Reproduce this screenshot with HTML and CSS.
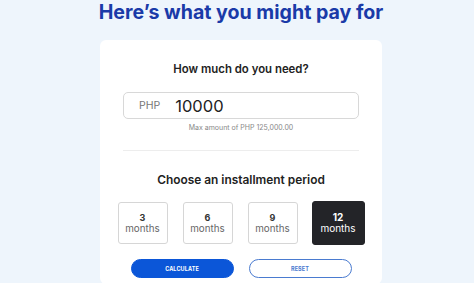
FILE: index.html
```html
<!DOCTYPE html>
<html lang="en">
<head>
<meta charset="utf-8">
<title>Installment calculator</title>
<link rel="stylesheet" href="styles.css">
</head>
<body>
<main class="page">
  <h1 class="title">Here’s what you might pay for</h1>
  <section class="card">
    <h2 class="label">How much do you need?</h2>
    <div class="amount">
      <span class="currency">PHP</span>
      <span class="value">10000</span>
    </div>
    <p class="hint">Max amount of PHP 125,000.00</p>
    <hr class="divider">
    <h2 class="label label-period">Choose an installment period</h2>
    <div class="periods">
      <div class="period"><span class="num">3</span><span class="unit">months</span></div>
      <div class="period"><span class="num">6</span><span class="unit">months</span></div>
      <div class="period"><span class="num">9</span><span class="unit">months</span></div>
      <div class="period period-active"><span class="num">12</span><span class="unit">months</span></div>
    </div>
    <div class="actions">
      <button class="btn btn-primary">CALCULATE</button>
      <button class="btn btn-outline">RESET</button>
    </div>
  </section>
</main>
</body>
</html>
```
FILE: styles.css
```css
html, body {
  margin: 0;
  padding: 0;
  height: 100%;
  overflow: hidden;
}
body {
  background: #eef5fc;
  font-family: "Inter", "Noto Sans", sans-serif;
  color: #222;
}
.page {
  display: flex;
  flex-direction: column;
  align-items: center;
  padding-left: 8px;
}
.title {
  margin: 0;
  height: 40px;
  line-height: 24px;
  font-size: 19.6px;
  font-weight: 700;
  color: #1a3aa8;
}
.card {
  width: 282px;
  box-sizing: border-box;
  background: #fff;
  border-radius: 6px;
  padding: 21px 23px 6px;
  display: flex;
  flex-direction: column;
  align-items: center;
}
.label {
  margin: 0;
  font-size: 11.4px;
  line-height: 16px;
  font-weight: 600;
  color: #222;
}
.amount {
  margin-top: 15px;
  width: 236px;
  height: 27px;
  box-sizing: border-box;
  border: 1px solid #d8d8d8;
  border-radius: 5px;
  display: flex;
  align-items: center;
  padding-left: 15px;
  gap: 15px;
}
.currency {
  font-size: 10.5px;
  color: #777;
}
.value {
  font-size: 16.5px;
  color: #222;
}
.hint {
  margin: 4px 0 0;
  font-size: 7px;
  line-height: 10px;
  color: #888;
}
.divider {
  margin: 17px 0 0;
  width: 236px;
  border: 0;
  border-top: 1px solid #ededed;
}
.label-period {
  margin-top: 21px;
  font-size: 11.9px;
}
.periods {
  margin-top: 13px;
  display: flex;
  align-items: center;
  gap: 15px;
}
.period {
  width: 50px;
  height: 42px;
  box-sizing: border-box;
  border: 1px solid #d6d6d6;
  border-radius: 3px;
  display: flex;
  flex-direction: column;
  align-items: center;
  justify-content: center;
  line-height: 11px;
}
.num {
  font-size: 9px;
  font-weight: 700;
  color: #333;
}
.unit {
  font-size: 9.8px;
  color: #666;
}
.period-active {
  width: 53px;
  height: 44px;
  background: #232428;
  border-color: #232428;
  margin-left: -1px;
}
.period-active .num,
.period-active .unit {
  color: #fff;
  font-size: 10px;
}
.actions {
  margin-top: 14px;
  display: flex;
  gap: 15px;
}
.btn {
  width: 103px;
  height: 19px;
  box-sizing: border-box;
  border-radius: 10px;
  font-family: "Inter", "Noto Sans", sans-serif;
  font-size: 5.5px;
  font-weight: 700;
  letter-spacing: 0.1px;
  padding: 0;
  cursor: pointer;
}
.btn-primary {
  background: #0b56d8;
  border: 1px solid #0b56d8;
  color: #fff;
}
.btn-outline {
  background: #fff;
  border: 1px solid #4a7bd0;
  color: #4a7bd0;
}
```
